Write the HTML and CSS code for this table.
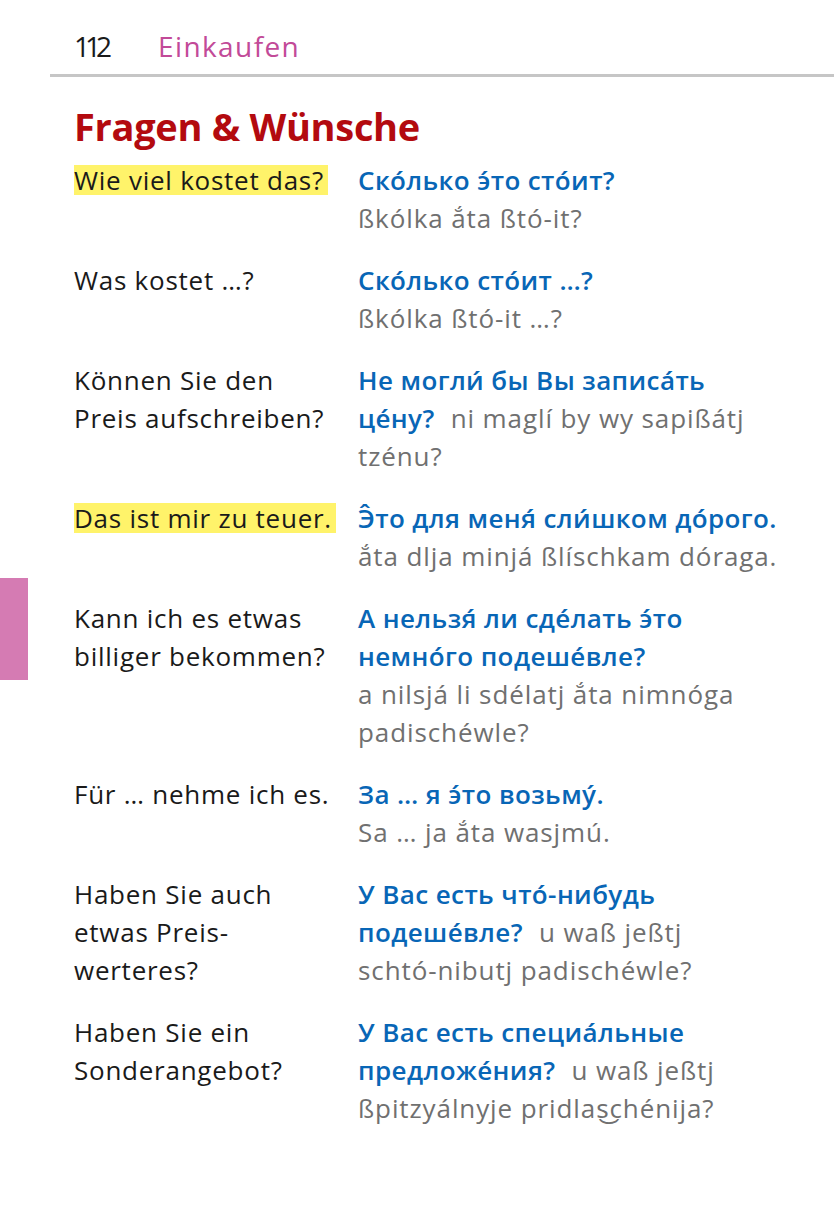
FILE: index.html
```html
<!DOCTYPE html>
<html lang="de">
<head>
<meta charset="utf-8">
<title>Einkaufen – Fragen &amp; Wünsche</title>
<link rel="stylesheet" href="styles.css">
</head>
<body>
<div class="page">
  <header class="running-head">
    <span class="page-no">112</span>
    <span class="chapter">Einkaufen</span>
  </header>
  <div class="side-tab"></div>
  <main class="content">
    <h1 class="title">Fragen &amp; Wünsche</h1>
    <div class="phrases">
      <div class="de"><span class="hl">Wie viel kostet das?</span></div>
      <div class="ru"><span class="cy">Ско́лько э́то сто́ит?</span><br><span class="tr">ßkólka ắta ßtó-it?</span></div>

      <div class="de">Was kostet …?</div>
      <div class="ru"><span class="cy">Ско́лько сто́ит …?</span><br><span class="tr">ßkólka ßtó-it …?</span></div>

      <div class="de">Können Sie den<br>Preis aufschreiben?</div>
      <div class="ru"><span class="cy">Не могли́ бы Вы записа́ть<br>це́ну?</span><span class="tr gap">ni maglí by wy sapißátj<br>tzénu?</span></div>

      <div class="de"><span class="hl">Das ist mir zu teuer.</span></div>
      <div class="ru"><span class="cy">Э̂то для меня́ сли́шком до́рого.</span><br><span class="tr">ắta dlja minjá ßlíschkam dóraga.</span></div>

      <div class="de">Kann ich es etwas<br>billiger bekommen?</div>
      <div class="ru"><span class="cy">А нельзя́ ли сде́лать э́то<br>немно́го подеше́вле?</span><br><span class="tr">a nilsjá li sdélatj ắta nimnóga<br>padischéwle?</span></div>

      <div class="de">Für … nehme ich es.</div>
      <div class="ru"><span class="cy">За … я э́то возьму́.</span><br><span class="tr">Sa … ja ắta wasjmú.</span></div>

      <div class="de">Haben Sie auch<br>etwas Preis-<br>werteres?</div>
      <div class="ru"><span class="cy">У Вас есть что́-нибудь<br>подеше́вле?</span><span class="tr gap">u waß jeßtj<br>schtó-nibutj padischéwle?</span></div>

      <div class="de">Haben Sie ein<br>Sonderangebot?</div>
      <div class="ru"><span class="cy">У Вас есть специа́льные<br>предложе́ния?</span><span class="tr gap">u waß jeßtj<br>ßpitzyálnyje pridlas͜chénija?</span></div>
    </div>
  </main>
</div>
</body>
</html>
```

FILE: styles.css
```css
html, body {
  margin: 0;
  padding: 0;
  background: #ffffff;
}

.page {
  position: relative;
  width: 834px;
  min-height: 1216px;
  font-family: "Open Sans", "Noto Sans", sans-serif;
  color: #1a1a1a;
}

.running-head {
  margin-left: 50px;
  padding: 29px 0 10px 24px;
  border-bottom: 3px solid #c6c6c6;
  display: flex;
  align-items: baseline;
  font-size: 28px;
  line-height: 35px;
}

.page-no {
  color: #1a1a1a;
  letter-spacing: -5px;
  width: 84px;
}

.chapter {
  color: #c24a98;
  letter-spacing: 1.4px;
}

.side-tab {
  position: absolute;
  left: 0;
  top: 578px;
  width: 28px;
  height: 102px;
  background: #d57bb3;
}

.content {
  padding-left: 74px;
}

.title {
  margin: 26px 0 12px;
  font-size: 38px;
  line-height: 46px;
  font-weight: 700;
  color: #b30a0f;
  letter-spacing: -0.3px;
}

.phrases {
  display: grid;
  grid-template-columns: 284px 1fr;
  row-gap: 24px;
  font-size: 26px;
  line-height: 38px;
  white-space: nowrap;
}

.de {
  color: #1a1a1a;
  letter-spacing: 0.75px;
}

.hl {
  padding-right: 4px;
  background: linear-gradient(#fff36a, #fff36a) no-repeat;
  background-size: 100% 30px;
  background-position: 0 55%;
}

.cy {
  color: #0866b6;
  font-weight: 600;
  letter-spacing: 0.4px;
}

.tr {
  color: #707070;
  letter-spacing: 0.9px;
}

.gap {
  margin-left: 16px;
}
```
